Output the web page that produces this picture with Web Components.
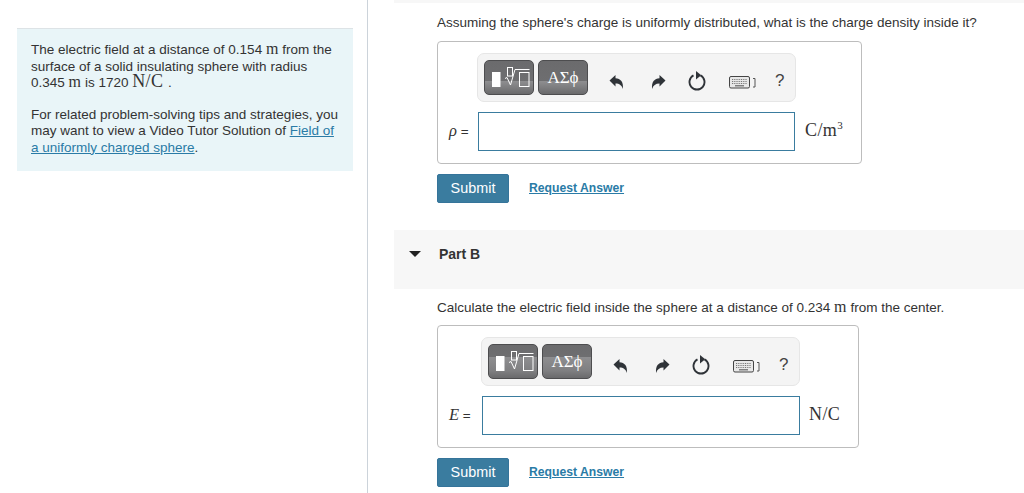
<!DOCTYPE html>
<html>
<head>
<meta charset="utf-8">
<style>
html, body { margin: 0; height: 493px; overflow: hidden; background: #fff; }
body { font-family: "Liberation Sans", Arial, sans-serif; font-size: 13.5px; color: #333; }
info-panel a { color: #2a7ba6; }
</style>
</head>
<body>
<quiz-page>
  <info-panel slot="side">
    <p>The electric field at a distance of 0.154 <math-text>m</math-text> from the surface of a solid insulating sphere with radius 0.345 <math-text>m</math-text> is 1720 <math-text big>N/C</math-text> .</p>
    <p>For related problem-solving tips and strategies, you may want to view a Video Tutor Solution of <a href="#">Field of a uniformly charged sphere</a>.</p>
  </info-panel>

  <part-body style="--top:12px;--box-top:10px">
    Assuming the sphere's charge is uniformly distributed, what is the charge density inside it?
    <answer-box slot="box" symbol="ρ" unit="C/m" sup="3" split="60" width="425" gap="40" unit-gap="10"></answer-box>
  </part-body>

  <part-header>Part B</part-header>

  <part-body style="--top:11px;--box-top:9px">
    Calculate the electric field inside the sphere at a distance of 0.234 <math-text>m</math-text> from the center.
    <answer-box slot="box" symbol="E" unit="N/C" split="35" width="422" gap="44" unit-gap="9"></answer-box>
  </part-body>
</quiz-page>

<script>
class QuizPage extends HTMLElement {
  constructor() {
    super();
    this.attachShadow({mode: 'open'});
    this.shadowRoot.innerHTML = `
      <style>
        :host { display: flex; height: 493px; }
        #side { width: 367px; border-right: 1px solid #ccd3da; padding-top: 28px; flex: none; }
        #main { flex: 1; padding-left: 26px; min-width: 0; }
        #topBand { height: 3px; background: #f7f7f7; }
      </style>
      <div id="side"><slot name="side"></slot></div>
      <div id="main"><div id="topBand"></div><slot></slot></div>
    `;
  }
}
customElements.define('quiz-page', QuizPage);

class InfoPanel extends HTMLElement {
  constructor() {
    super();
    this.attachShadow({mode: 'open'});
    this.shadowRoot.innerHTML = `
      <style>
        :host { display: block; width: 336px; margin-left: 17px; box-sizing: border-box; height: 143px;
                padding: 13px 14px 0 14px; background: #e9f5f8; border-top: 1px solid #dde3e6;
                line-height: 16.5px; color: #333; }
        ::slotted(p) { margin: 0 0 15px; }
        ::slotted(p:last-child) { margin: 0; }
      </style>
      <slot></slot>
    `;
  }
}
customElements.define('info-panel', InfoPanel);

// math runs, upright serif like the rendered equations
class MathText extends HTMLElement {
  constructor() {
    super();
    this.attachShadow({mode: 'open'});
    this.shadowRoot.innerHTML = `
      <style>
        :host { font-family: "Liberation Serif", "Times New Roman", serif; font-size: 16px; line-height: 0; }
        :host([big]) { font-size: 18px; letter-spacing: .3px; }
      </style>
      <slot></slot>
    `;
  }
}
customElements.define('math-text', MathText);

class PartHeader extends HTMLElement {
  constructor() {
    super();
    this.attachShadow({mode: 'open'});
    this.shadowRoot.innerHTML = `
      <style>
        :host { display: flex; align-items: center; height: 59px; background: #f7f7f7; font-weight: bold;
                font-size: 14px; color: #333; padding-left: 15px; padding-bottom: 11px; box-sizing: border-box; margin-top: 27px; }
        svg { width: 12px; height: 6px; margin-right: 18px; flex: none; }
      </style>
      <svg viewBox="0 0 12 6"><path d="M0 0H12L6 6Z" fill="#222"/></svg>
      <slot></slot>
    `;
  }
}
customElements.define('part-header', PartHeader);

class PartBody extends HTMLElement {
  constructor() {
    super();
    this.attachShadow({mode: 'open'});
    this.shadowRoot.innerHTML = `
      <style>
        :host { display: block; padding: var(--top) 0 0 43px; line-height: 16px; color: #333; }
        #box { margin-top: var(--box-top); }
      </style>
      <slot></slot>
      <div id="box"><slot name="box"></slot></div>
    `;
  }
}
customElements.define('part-body', PartBody);

const toolbarTpl = document.createElement('template');
toolbarTpl.innerHTML = `
  <style>
    :host { display: flex; align-items: center; width: 319px; height: 49px; box-sizing: border-box;
            background: #f4f4f4; border: 1px solid #e6e6e6; border-radius: 7px; padding: 6px 0 0 6px; }
    .tpl { width: 50px; height: 35px; box-sizing: border-box; border: 1px solid #4d4d4f; border-radius: 5px;
           margin-right: 4px; margin-top: -6px; flex: none; display: flex; align-items: flex-start; justify-content: center;
           background: linear-gradient(#6b6b6d 0, #6e6e70 var(--split), #8f8f91 var(--split), #7f7f81 78%, #6a6a6c 100%);
           color: #fff; font-family: "Liberation Serif", serif; font-size: 17px; line-height: 34px; }
    .tpl svg { width: 48px; height: 33px; }
    .tool { flex: none; display: block; }
    #undo { margin-left: 17px; margin-top: 2px; }
    #redo { margin-left: 27px; margin-top: 2px; }
    #reset { margin-left: 22px; }
    #keys { margin-left: 23px; margin-top: 3px; }
    #help { margin-left: 19px; font-size: 17px; color: #444; width: 12px; line-height: 20px; margin-top: 1px; }
  </style>
  <div class="tpl">
    <svg viewBox="0 0 48 33" fill="none" stroke="#fff">
      <rect x="7" y="11" width="8.5" height="15" fill="#fff" stroke="none"/>
      <rect x="22.5" y="6.5" width="5" height="8.5"/>
      <path d="M20 17.5l2 -1l3.5 7.5l4.5 -15.5h14.5"/>
      <rect x="34.5" y="11.5" width="9.5" height="14"/>
    </svg>
  </div>
  <div class="tpl">AΣϕ</div>
  <svg id="undo" class="tool" width="15" height="16" viewBox="0 0 15 16"><path d="M0.5 6.5L6.5 1V4.2C11.5 4.4 14.8 8 13.8 15C12.8 11.2 10.5 9.4 6.5 9.4V12.4Z" fill="#2f3338"/></svg>
  <svg id="redo" class="tool" width="15" height="16" viewBox="0 0 15 16"><path d="M14.5 6.5L8.5 1V4.2C3.5 4.4 .2 8 1.2 15C2.2 11.2 4.5 9.4 8.5 9.4V12.4Z" fill="#2f3338"/></svg>
  <svg id="reset" class="tool" width="18" height="20" viewBox="0 0 18 20" fill="none"><path d="M5.5 4.4A7.5 7.5 0 1 0 12.5 4.4" stroke="#2f3338" stroke-width="1.9"/><path d="M8 0V8.4L13.2 4.2Z" fill="#2f3338"/></svg>
  <svg id="keys" class="tool" width="27" height="13" viewBox="0 0 27 13" fill="none">
    <rect x=".5" y=".5" width="20" height="11.5" rx="1.5" fill="#e8e8e8" stroke="#444"/>
    <path d="M3 3.5H18M3 5.5H18M3 7.5H18" stroke="#777" stroke-dasharray="1 .8"/>
    <path d="M6 9.8H15" stroke="#666" stroke-width="1.2"/>
    <path d="M24 2.5h2v8.5h-2" stroke="#555"/>
  </svg>
  <div id="help">?</div>
`;
class MathToolbar extends HTMLElement {
  constructor() {
    super();
    this.attachShadow({mode: 'open'});
    this.shadowRoot.appendChild(toolbarTpl.content.cloneNode(true));
  }
}
customElements.define('math-toolbar', MathToolbar);

class AnswerBox extends HTMLElement {
  constructor() {
    super();
    this.attachShadow({mode: 'open'});
  }
  connectedCallback() {
    const gap = this.getAttribute('gap');
    const sup = this.getAttribute('sup');
    this.shadowRoot.innerHTML = `
      <style>
        :host { display: block; }
        #box { width: ${this.getAttribute('width')}px; height: 123px; box-sizing: border-box; border: 1px solid #bdbdbd;
               border-radius: 4px; padding: 11px 0 0 ${gap - 1}px; }
        math-toolbar { --split: ${this.getAttribute('split')}%; }
        #row { display: flex; align-items: center; margin: 10px 0 0 ${12 - gap}px; }
        #sym { width: ${gap - 11}px; flex: none; font-size: 13.5px; color: #333; white-space: nowrap; margin-top: -1px; }
        #sym i { font-family: "Liberation Serif", serif; font-size: 16.5px; }
        #field { width: ${sup ? 317 : 318}px; height: 39px; box-sizing: border-box; border: 1px solid #3a7c9f; background: #fff; flex: none; }
        #unit { margin-left: ${this.getAttribute('unit-gap')}px; margin-top: -3px; font-family: "Liberation Serif", serif; font-size: 18px; letter-spacing: .4px; color: #333; white-space: nowrap; }
        #unit sup { font-size: 11px; line-height: 0; }
        #actions { display: flex; align-items: center; margin-top: 10px; }
        #submit { width: 72px; height: 29px; box-sizing: border-box; background: #3a7c9f; color: #fff; border: 1px solid #35749a;
                  border-radius: 2px; font: 14.4px "Liberation Sans", Arial, sans-serif; padding: 0 0 2px; }
        a { margin-left: 20px; margin-top: -2px; color: #2a7ba6; font-weight: bold; font-size: 12.2px; }
      </style>
      <div id="box">
        <math-toolbar></math-toolbar>
        <div id="row">
          <div id="sym"><i>${this.getAttribute('symbol')}</i> =</div>
          <div id="field"></div>
          <div id="unit">${this.getAttribute('unit')}${sup ? `<sup>${sup}</sup>` : ''}</div>
        </div>
      </div>
      <div id="actions">
        <button id="submit">Submit</button>
        <a href="#">Request Answer</a>
      </div>
    `;
  }
}
customElements.define('answer-box', AnswerBox);
</script>
</body>
</html>
